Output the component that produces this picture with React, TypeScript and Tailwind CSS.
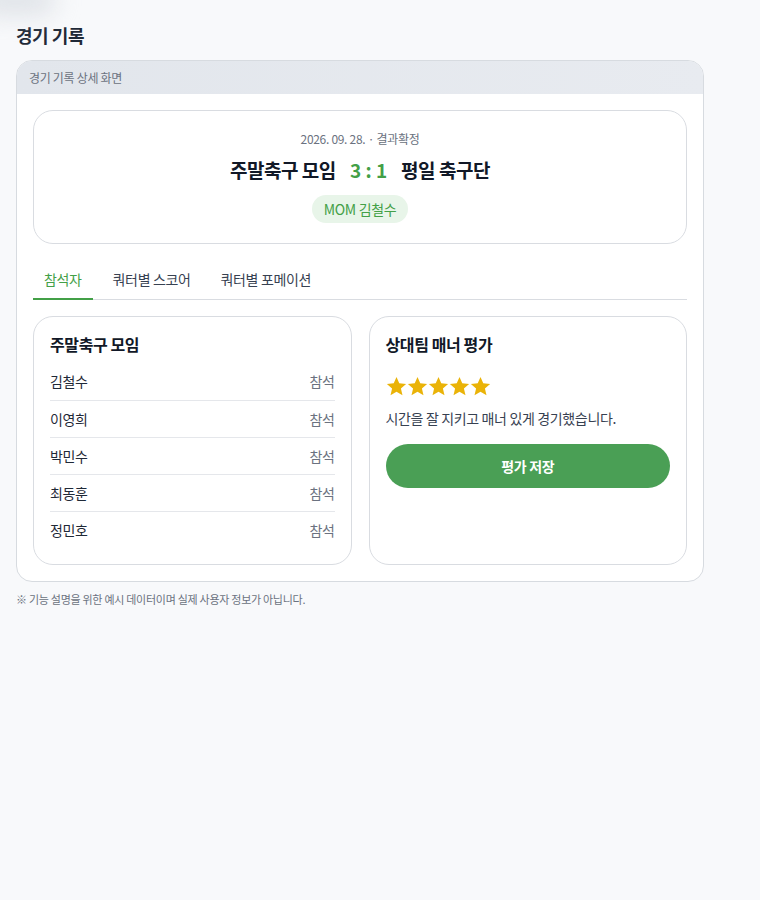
import React from "react";

const font = { fontFamily: '"Noto Sans CJK KR", "Noto Sans", sans-serif' };

const players = ["김철수", "이영희", "박민수", "최동훈", "정민호"];

function Star() {
  return (
    <svg width="21" height="21" viewBox="0 0 24 24" className="text-[#eab308]">
      <path
        fill="currentColor"
        d="M12 1.2l3.15 7.2 7.85.7-5.95 5.2 1.8 7.7L12 18l-6.85 4 1.8-7.7L1 9.1l7.85-.7z"
      />
    </svg>
  );
}

export default function App() {
  return (
    <div className="relative min-h-[900px] bg-[#f8f9fb] text-[#111827]" style={font}>
      <div className="pointer-events-none absolute -left-6 -top-4 h-8 w-20 rounded-full bg-gray-300/60 blur-md" />
      <div className="px-4 pt-6">
        <h1 className="text-[18px] font-bold leading-[22px] tracking-tight text-[#1f2937]">경기 기록</h1>
        <div className="mt-[14px] w-[688px] overflow-hidden rounded-2xl border border-[#d7dbe0] bg-white">
          <div className="flex h-[33px] items-center bg-gradient-to-r from-[#e2e6ec] to-[#e8ebf0] px-3 text-[12px] tracking-tight text-[#6b7280]">
            경기 기록 상세 화면
          </div>
          <div className="p-4">
            <div className="flex flex-col items-center rounded-[20px] border border-[#d9dce1] px-4 pb-[20px] pt-[20px]">
              <div className="text-[12px] leading-4 tracking-tight text-[#6b7280]">2026. 09. 28. · 결과확정</div>
              <div className="mt-[7px] flex items-center text-[19px] font-bold leading-8 tracking-tight">
                <span>주말축구 모임</span>
                <span className="mx-[14px] font-semibold tracking-normal text-[#43a047]">3 : 1</span>
                <span>평일 축구단</span>
              </div>
              <div className="mt-[9px] flex h-[28px] items-center rounded-full bg-[#e8f5e9] px-3 text-[14px] tracking-tight text-[#43a047]">
                MOM 김철수
              </div>
            </div>

            <div className="mt-4 flex border-b border-[#d9dce1] text-[14px] tracking-tight">
              <div className="-mb-px border-b-2 border-[#43a047] px-[11px] pb-[9px] pt-[9px] leading-5 text-[#43a047]">참석자</div>
              <div className="pb-[9px] pl-5 pr-[18px] pt-[9px] leading-5 text-[#374151]">쿼터별 스코어</div>
              <div className="px-3 pb-[9px] pt-[9px] leading-5 text-[#374151]">쿼터별 포메이션</div>
            </div>

            <div className="mt-4 grid grid-cols-2 gap-[17px]">
              <div className="rounded-[20px] border border-[#d9dce1] px-4 pb-[16px] pt-[15px]">
                <div className="text-[16px] font-semibold leading-6 tracking-tight">주말축구 모임</div>
                <div className="mt-[7px]">
                  {players.map((p, i) => (
                    <div
                      key={p}
                      className={`flex h-[37px] items-center justify-between text-[14px] tracking-tight ${i > 0 ? "border-t border-[#e5e7eb]" : ""}`}
                    >
                      <span className="text-[#1f2937]">{p}</span>
                      <span className="text-[#6b7280]">참석</span>
                    </div>
                  ))}
                </div>
              </div>
              <div className="rounded-[20px] border border-[#d9dce1] px-4 pt-[15px]">
                <div className="text-[16px] font-semibold leading-6 tracking-tight">상대팀 매너 평가</div>
                <div className="mt-[20px] flex">
                  <Star />
                  <Star />
                  <Star />
                  <Star />
                  <Star />
                </div>
                <div className="mt-[11px] text-[14px] leading-5 tracking-tight text-[#374151]">
                  시간을 잘 지키고 매너 있게 경기했습니다.
                </div>
                <button className="mt-[16px] flex h-[44px] w-full items-center justify-center rounded-full bg-[#4a9f55] text-[14px] font-semibold tracking-tight text-white">
                  평가 저장
                </button>
              </div>
            </div>
          </div>
        </div>
        <div className="mt-[9px] text-[11px] tracking-tight text-[#6b7280]">
          ※ 기능 설명을 위한 예시 데이터이며 실제 사용자 정보가 아닙니다.
        </div>
      </div>
    </div>
  );
}
